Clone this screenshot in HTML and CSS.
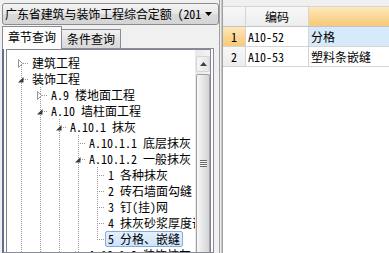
FILE: index.html
```html
<!DOCTYPE html>
<html>
<head>
<meta charset="utf-8">
<link rel="stylesheet" href="styles.css">
</head>
<body>
<div class="app">
  <div class="left">
    <div class="combo">
      <span class="combo-text">广东省建筑与装饰工程综合定额 (201</span>
      <svg class="combo-arrow" width="7" height="4" viewBox="0 0 7 4"><polygon points="0,0 7,0 3.5,4" fill="#000"/></svg>
    </div>
    <div class="tabs">
      <div class="tab active">章节查询</div>
      <div class="tab">条件查询</div>
    </div>
    <div class="panel">
      <div class="tree-box">
        <div class="tree">
          <div class="row"><span class="n n-first"><svg width="17" height="16"><polygon class="col" points="6.5,4.5 10.5,8.5 6.5,12.5"/></svg></span><span class="lbl">建筑工程</span></div>
          <div class="row"><span class="n n-tee"><svg width="17" height="16"><polygon class="exp" points="11.5,6 11.5,11.5 6,11.5"/></svg></span><span class="lbl">装饰工程</span></div>
          <div class="row"><span class="g"></span><span class="n n-tee"><svg width="17" height="16"><polygon class="col" points="6.5,4.5 10.5,8.5 6.5,12.5"/></svg></span><span class="lbl">A.9 楼地面工程</span></div>
          <div class="row"><span class="g"></span><span class="n n-tee"><svg width="17" height="16"><polygon class="exp" points="11.5,6 11.5,11.5 6,11.5"/></svg></span><span class="lbl">A.10 墙柱面工程</span></div>
          <div class="row"><span class="g"></span><span class="g"></span><span class="n n-tee"><svg width="17" height="16"><polygon class="exp" points="11.5,6 11.5,11.5 6,11.5"/></svg></span><span class="lbl">A.10.1 抹灰</span></div>
          <div class="row"><span class="g"></span><span class="g"></span><span class="g"></span><span class="n n-tee"></span><span class="lbl">A.10.1.1 底层抹灰</span></div>
          <div class="row"><span class="g"></span><span class="g"></span><span class="g"></span><span class="n n-tee"><svg width="17" height="16"><polygon class="exp" points="11.5,6 11.5,11.5 6,11.5"/></svg></span><span class="lbl">A.10.1.2 一般抹灰</span></div>
          <div class="row"><span class="g"></span><span class="g"></span><span class="g"></span><span class="g"></span><span class="n n-tee"></span><span class="lbl">1 各种抹灰</span></div>
          <div class="row"><span class="g"></span><span class="g"></span><span class="g"></span><span class="g"></span><span class="n n-tee"></span><span class="lbl">2 砖石墙面勾缝</span></div>
          <div class="row"><span class="g"></span><span class="g"></span><span class="g"></span><span class="g"></span><span class="n n-tee"></span><span class="lbl">3 钉(挂)网</span></div>
          <div class="row"><span class="g"></span><span class="g"></span><span class="g"></span><span class="g"></span><span class="n n-tee"></span><span class="lbl">4 抹灰砂浆厚度调整</span></div>
          <div class="row"><span class="g"></span><span class="g"></span><span class="g"></span><span class="g"></span><span class="n n-last"></span><span class="lbl sel">5 分格、嵌缝</span></div>
          <div class="row"><span class="g"></span><span class="g"></span><span class="g"></span><span class="n n-tee"><svg width="17" height="16"><polygon class="col" points="6.5,4.5 10.5,8.5 6.5,12.5"/></svg></span><span class="lbl">A.10.1.3 装饰抹灰</span></div>
        </div>
        <div class="vscroll">
          <div class="sb-up"><svg width="7" height="4" viewBox="0 0 7 4"><polygon points="0,4 7,4 3.5,0" fill="#404040"/></svg></div>
          <div class="sb-thumb"><span class="grip"></span></div>
        </div>
      </div>
    </div>
  </div>
  <div class="splitter"></div>
  <div class="grid">
    <div class="grow head">
      <div class="c rh"></div>
      <div class="c code">编码</div>
      <div class="c name hot"></div>
    </div>
    <div class="grow">
      <div class="c rh hot">1</div>
      <div class="c code">A10-52</div>
      <div class="c name cur">分格</div>
    </div>
    <div class="grow">
      <div class="c rh">2</div>
      <div class="c code">A10-53</div>
      <div class="c name">塑料条嵌缝</div>
    </div>
  </div>
</div>
</body>
</html>
```

FILE: styles.css
```css
* { box-sizing: border-box; }
html, body { margin: 0; padding: 0; }
body {
  width: 389px;
  height: 253px;
  overflow: hidden;
  background: #f0f0f0;
  font-family: "Noto Sans Mono CJK SC", "Noto Sans CJK SC", sans-serif;
  font-size: 12px;
  color: #000;
}
.app { display: flex; height: 253px; }

.left {
  width: 219px;
  flex: none;
  display: flex;
  flex-direction: column;
  padding: 3px 0 0 2px;
}
.combo {
  width: 217px;
  height: 22px;
  flex: none;
  display: flex;
  align-items: center;
  border: 1px solid #8c8c8c;
  border-radius: 3px;
  background: linear-gradient(#f4f4f4, #e6e6e6 50%, #dadada 51%, #d4d4d4);
  padding: 0 0 0 2px;
  overflow: hidden;
}
.combo-text { flex: 1; white-space: nowrap; overflow: hidden; line-height: 16px; letter-spacing: -0.1px; }
.combo-arrow { flex: none; margin: 0 6px 0 1px; display: block; }

.tabs { display: flex; align-items: flex-end; margin-top: 1px; height: 22px; flex: none; }
.tab {
  width: 60px;
  height: 19px;
  border: 1px solid #898c95;
  border-bottom: none;
  background: linear-gradient(#f2f2f2, #e3e3e3 50%, #d9d9d9);
  text-align: center;
  line-height: 18px;
  margin-left: -1px;
}
.tab:first-child { margin-left: 0; }
.tab.active {
  background: #fcfcfc;
  line-height: 20px;
  position: relative;
  z-index: 1;
  margin-bottom: -1px;
  height: 23px;
}

.panel {
  flex: 1;
  width: 212px;
  border: 1px solid #898c95;
  border-left: 2px solid #5d7092;
  background: #fcfcfc;
  padding: 0 2px 0 2px;
  display: flex;
  min-height: 0;
}
.tree-box {
  flex: 1;
  display: flex;
  border: 1px solid #828790;
  border-bottom: none;
  background: #fff;
  min-height: 0;
  overflow: hidden;
}
.tree {
  flex: 1;
  overflow: hidden;
  padding: 5px 0 0 5px;
  min-width: 0;
}
.row { display: flex; height: 16px; white-space: nowrap; }
.g, .n { flex: none; height: 16px; display: block; }
.g {
  width: 19px;
  background: repeating-linear-gradient(to bottom, #9a9a9a 0 1px, transparent 1px 2px) 9px 0 / 1px 16px no-repeat;
}
.n { width: 17px; }
.n svg { display: block; }
.n-tee {
  background:
    repeating-linear-gradient(to bottom, #9a9a9a 0 1px, transparent 1px 2px) 9px 0 / 1px 16px no-repeat,
    repeating-linear-gradient(to right, #9a9a9a 0 1px, transparent 1px 2px) 9px 8px / 8px 1px no-repeat;
}
.n-first {
  background:
    repeating-linear-gradient(to bottom, #9a9a9a 0 1px, transparent 1px 2px) 9px 8px / 1px 8px no-repeat,
    repeating-linear-gradient(to right, #9a9a9a 0 1px, transparent 1px 2px) 9px 8px / 8px 1px no-repeat;
}
.n-last {
  background:
    repeating-linear-gradient(to bottom, #9a9a9a 0 1px, transparent 1px 2px) 9px 0 / 1px 9px no-repeat,
    repeating-linear-gradient(to right, #9a9a9a 0 1px, transparent 1px 2px) 9px 8px / 8px 1px no-repeat;
}
.col { fill: #fff; stroke: #989898; stroke-width: 1; }
.exp { fill: #3c3c3c; }
.lbl {
  display: block;
  height: 16px;
  line-height: 14px;
  padding: 0 2px;
  border: 1px solid transparent;
  border-radius: 2px;
}
.lbl.sel {
  border-color: #84acdd;
  background: linear-gradient(#e4f0fd, #cde3fc);
}

.vscroll {
  width: 15px;
  flex: none;
  background: linear-gradient(to right, #e8e8e8, #f4f4f4);
  display: flex;
  flex-direction: column;
  padding: 6px 0 0 1px;
}
.sb-up {
  height: 16px;
  display: flex;
  align-items: center;
  justify-content: center;
  border: 1px solid #d4d4d4;
  border-radius: 2px;
  background: linear-gradient(to right, #f6f6f6, #e4e4e4);
}
.sb-up svg { display: block; }
.sb-thumb {
  flex: 1;
  margin-top: 2px;
  border: 1px solid #a0a0a0;
  border-bottom: none;
  border-radius: 2px 2px 0 0;
  background: linear-gradient(to right, #f7f7f7, #e8e8e8 45%, #d4d4d4);
  display: flex;
  justify-content: center;
  padding-top: 85px;
}
.grip {
  width: 7px;
  height: 7px;
  background: repeating-linear-gradient(to bottom, #6a6a6a 0 1px, #f4f4f4 1px 2px);
}

.splitter {
  width: 3px;
  flex: none;
  border-left: 1px solid #a0a0a0;
  border-right: 1px solid #c8c8c8;
  background: #ececec;
}

.grid {
  flex: 1;
  border-left: 1px solid #a0a0a0;
  background: linear-gradient(#f0f0f0 0 6px, #fff 6px);
  padding-top: 6px;
}
.grow { display: flex; height: 20px; border-bottom: 1px solid #d4d4d4; background: #fff; }
.grow.head { height: 21px; border-top: 1px solid #d4d4d4; border-bottom: 1px solid #c4c4c4; background: linear-gradient(#f7f7f7, #ededed); }
.c { border-right: 1px solid #d4d4d4; line-height: 19px; white-space: nowrap; overflow: hidden; }
.rh { width: 23px; flex: none; text-align: center; background: linear-gradient(#f7f7f7, #ededed); }
.code { width: 63px; flex: none; padding-left: 2px; }
.head .code { text-align: center; padding-left: 0; }
.name { flex: 1; padding-left: 2px; border-right: none; }
.hot { background: linear-gradient(#fde7b9, #f8c978); }
.cur { background: #d7eafb; }
```
